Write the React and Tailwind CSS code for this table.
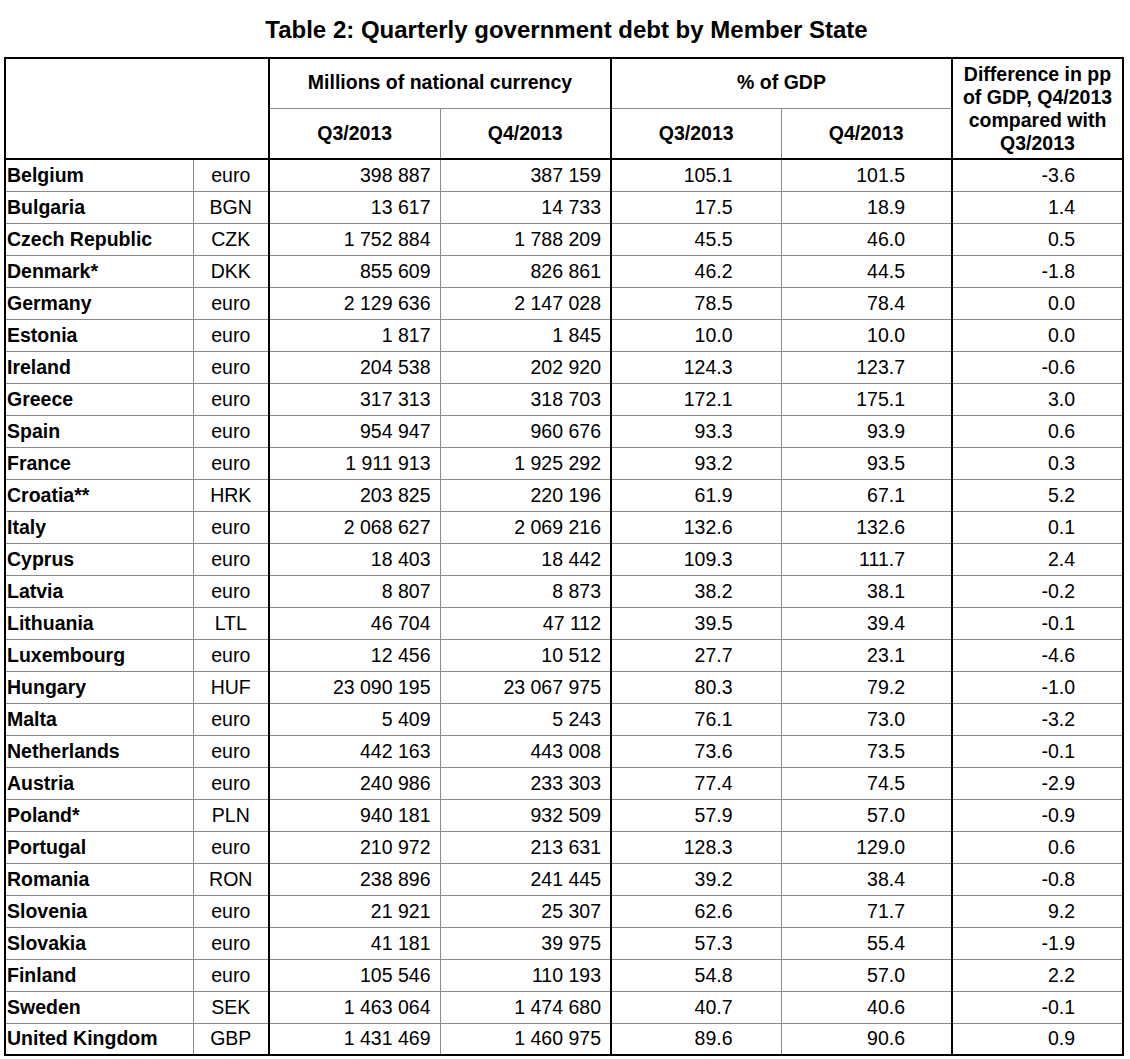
import React from "react";

const rows = [
  ["Belgium", "euro", "398 887", "387 159", "105.1", "101.5", "-3.6"],
  ["Bulgaria", "BGN", "13 617", "14 733", "17.5", "18.9", "1.4"],
  ["Czech Republic", "CZK", "1 752 884", "1 788 209", "45.5", "46.0", "0.5"],
  ["Denmark*", "DKK", "855 609", "826 861", "46.2", "44.5", "-1.8"],
  ["Germany", "euro", "2 129 636", "2 147 028", "78.5", "78.4", "0.0"],
  ["Estonia", "euro", "1 817", "1 845", "10.0", "10.0", "0.0"],
  ["Ireland", "euro", "204 538", "202 920", "124.3", "123.7", "-0.6"],
  ["Greece", "euro", "317 313", "318 703", "172.1", "175.1", "3.0"],
  ["Spain", "euro", "954 947", "960 676", "93.3", "93.9", "0.6"],
  ["France", "euro", "1 911 913", "1 925 292", "93.2", "93.5", "0.3"],
  ["Croatia**", "HRK", "203 825", "220 196", "61.9", "67.1", "5.2"],
  ["Italy", "euro", "2 068 627", "2 069 216", "132.6", "132.6", "0.1"],
  ["Cyprus", "euro", "18 403", "18 442", "109.3", "111.7", "2.4"],
  ["Latvia", "euro", "8 807", "8 873", "38.2", "38.1", "-0.2"],
  ["Lithuania", "LTL", "46 704", "47 112", "39.5", "39.4", "-0.1"],
  ["Luxembourg", "euro", "12 456", "10 512", "27.7", "23.1", "-4.6"],
  ["Hungary", "HUF", "23 090 195", "23 067 975", "80.3", "79.2", "-1.0"],
  ["Malta", "euro", "5 409", "5 243", "76.1", "73.0", "-3.2"],
  ["Netherlands", "euro", "442 163", "443 008", "73.6", "73.5", "-0.1"],
  ["Austria", "euro", "240 986", "233 303", "77.4", "74.5", "-2.9"],
  ["Poland*", "PLN", "940 181", "932 509", "57.9", "57.0", "-0.9"],
  ["Portugal", "euro", "210 972", "213 631", "128.3", "129.0", "0.6"],
  ["Romania", "RON", "238 896", "241 445", "39.2", "38.4", "-0.8"],
  ["Slovenia", "euro", "21 921", "25 307", "62.6", "71.7", "9.2"],
  ["Slovakia", "euro", "41 181", "39 975", "57.3", "55.4", "-1.9"],
  ["Finland", "euro", "105 546", "110 193", "54.8", "57.0", "2.2"],
  ["Sweden", "SEK", "1 463 064", "1 474 680", "40.7", "40.6", "-0.1"],
  ["United Kingdom", "GBP", "1 431 469", "1 460 975", "89.6", "90.6", "0.9"],
];

export default function App() {
  return (
    <div
      className="w-[1130px] h-[1059px] bg-white text-black"
      style={{ fontFamily: '"Liberation Sans", Arial, sans-serif' }}
    >
      <div className="h-[57px] flex items-center justify-center pl-[3px] pt-[3px]">
        <h1 className="text-[24px] font-bold leading-none">
          Table 2: Quarterly government debt by Member State
        </h1>
      </div>
      <table className="ml-[4px] w-[1120px] border-collapse table-fixed text-[19.5px] leading-[23px] border-2 border-black">
        <colgroup>
          <col className="w-[188px]" />
          <col className="w-[76px]" />
          <col className="w-[171px]" />
          <col className="w-[171px]" />
          <col className="w-[170px]" />
          <col className="w-[171px]" />
          <col className="w-[171px]" />
        </colgroup>
        <thead>
          <tr className="h-[50px]">
            <th colSpan={2} rowSpan={2} className="border-2 border-black border-b-2"></th>
            <th colSpan={2} className="border-2 border-black border-b border-b-[#8a8a8a] font-bold text-center align-middle pb-[1px]">
              Millions of national currency
            </th>
            <th colSpan={2} className="border-2 border-black border-b border-b-[#8a8a8a] font-bold text-center align-middle pb-[1px]">
              % of GDP
            </th>
            <th rowSpan={2} className="border-2 border-black font-bold text-center align-middle leading-[23px] px-1">
              Difference in pp
              <br />
              of GDP, Q4/2013
              <br />
              compared with
              <br />
              Q3/2013
            </th>
          </tr>
          <tr className="h-[51px]">
            <th className="border-b-2 border-black border-r border-r-[#8a8a8a] font-bold text-center">Q3/2013</th>
            <th className="border-b-2 border-black border-r-2 border-r-black font-bold text-center">Q4/2013</th>
            <th className="border-b-2 border-black border-r border-r-[#8a8a8a] font-bold text-center">Q3/2013</th>
            <th className="border-b-2 border-black border-r-2 border-r-black font-bold text-center">Q4/2013</th>
          </tr>
        </thead>
        <tbody>
          {rows.map((r, i) => (
            <tr key={r[0]} className="h-[32px]">
              <td className={`border-r border-r-[#8a8a8a] font-bold pl-px whitespace-nowrap ${i > 0 ? "border-t border-t-[#8a8a8a]" : ""}`}>
                {r[0]}
              </td>
              <td className={`border-r-2 border-r-black text-center ${i > 0 ? "border-t border-t-[#8a8a8a]" : ""}`}>
                {r[1]}
              </td>
              <td className={`border-r border-r-[#8a8a8a] text-right pr-[9px] ${i > 0 ? "border-t border-t-[#8a8a8a]" : ""}`}>
                {r[2]}
              </td>
              <td className={`border-r-2 border-r-black text-right pr-[9px] ${i > 0 ? "border-t border-t-[#8a8a8a]" : ""}`}>
                {r[3]}
              </td>
              <td className={`border-r border-r-[#8a8a8a] text-right pr-[48px] ${i > 0 ? "border-t border-t-[#8a8a8a]" : ""}`}>
                {r[4]}
              </td>
              <td className={`border-r-2 border-r-black text-right pr-[46px] ${i > 0 ? "border-t border-t-[#8a8a8a]" : ""}`}>
                {r[5]}
              </td>
              <td className={`text-right pr-[47px] ${i > 0 ? "border-t border-t-[#8a8a8a]" : ""}`}>
                {r[6]}
              </td>
            </tr>
          ))}
        </tbody>
      </table>
    </div>
  );
}
